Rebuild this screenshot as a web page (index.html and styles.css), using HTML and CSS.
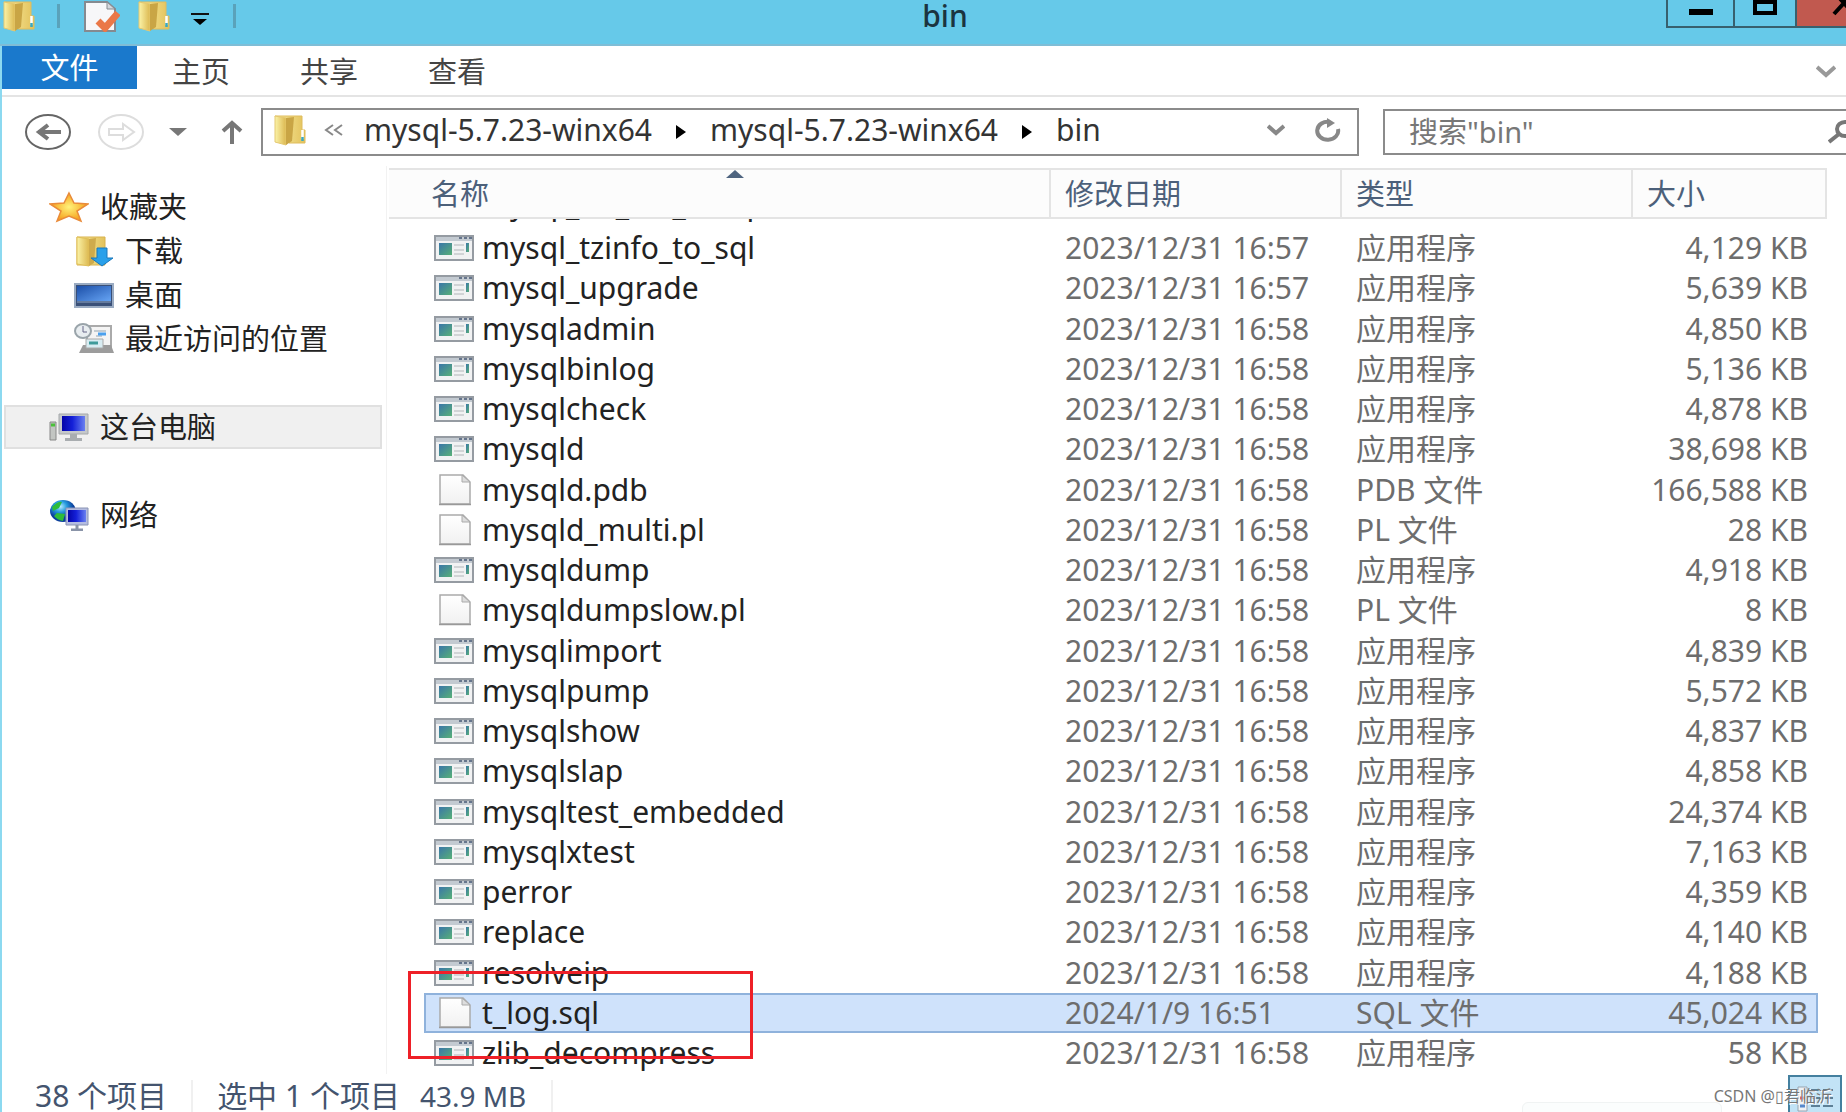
FILE: index.html
```html
<!DOCTYPE html>
<html lang="zh-CN">
<head>
<meta charset="utf-8">
<title>bin</title>
<link rel="stylesheet" href="styles.css">
</head>
<body>
<svg class="defs" aria-hidden="true">
  <defs>
    <linearGradient id="gold" x1="0" x2="1"><stop offset="0" stop-color="#fbf3a8"/><stop offset="1" stop-color="#dcb850"/></linearGradient>
    <linearGradient id="gold2" x1="0" x2="1"><stop offset="0" stop-color="#f8eca0"/><stop offset="1" stop-color="#e3c25c"/></linearGradient>
    <linearGradient id="paper" x1="0" y1="0" x2="0" y2="1"><stop offset="0" stop-color="#fff"/><stop offset="1" stop-color="#f1f1f1"/></linearGradient>
    <linearGradient id="app" x1="0" y1="0" x2="1" y2="1"><stop offset="0" stop-color="#3a76a8"/><stop offset="1" stop-color="#58b077"/></linearGradient>
    <linearGradient id="screen" x1="0" x2="1"><stop offset="0" stop-color="#0505a8"/><stop offset=".45" stop-color="#1420d8"/><stop offset="1" stop-color="#6a80f0"/></linearGradient>
    <linearGradient id="desk" x1="0" y1="0" x2="1" y2="1"><stop offset="0" stop-color="#1c4fa8"/><stop offset="1" stop-color="#66a4f4"/></linearGradient>
    <radialGradient id="star"><stop offset="0" stop-color="#fff27a"/><stop offset="1" stop-color="#f6a01c"/></radialGradient>
    <radialGradient id="globe" cx=".4" cy=".3"><stop offset="0" stop-color="#b8ecff"/><stop offset=".5" stop-color="#259ade"/><stop offset="1" stop-color="#0b3f9c"/></radialGradient>
    <symbol id="i-folder" viewBox="0 0 34 32">
      <path d="M2 2h27v14h3v13H16z" fill="url(#gold2)" stroke="#dfbc5c"/>
      <path d="M2 2l11 2v27L2 28z" fill="url(#gold)" stroke="#e4c870"/>
      <path d="M13 4l8-1-2 24-6 4z" fill="#c9a545"/>
      <path d="M29.500 16v9" stroke="#fff" stroke-width="2.500"/><path d="M29.500 23v4" stroke="#3aa8c0" stroke-width="2.500"/>
    </symbol>
    <symbol id="i-exe" viewBox="0 0 40 26">
      <path d="M1 1h38v24H1z" fill="#f1f2f3" stroke="#959ba2" stroke-width="2"/>
      <path d="M2 2h36v4H2z" fill="#c3cad1"/><path d="M25 3h3M30 3h3M35 3h3" stroke="#66758c" stroke-width="2"/>
      <path d="M5 8h13v12H5z" fill="url(#app)"/><path d="M20 10h10M20 15h10M20 19h10" stroke="#c6cacd" stroke-width="1.500"/>
      <path d="M32 8h3v9h-3z" fill="url(#app)"/>
    </symbol>
    <symbol id="i-file" viewBox="0 0 40 32">
      <path d="M6 1h23l7 7v22H6z" fill="url(#paper)" stroke="#aaa" stroke-width="1.500"/>
      <path d="M28 1v7h8z" fill="#ddd" stroke="#aaa"/><path d="M5 30.500h32" stroke="#999" stroke-width="1.500"/>
    </symbol>
  </defs>
</svg>

<div class="window">
  <header class="titlebar">
    <div class="quick">
      <svg class="folder" width="34" height="32"><use href="#i-folder"/></svg>
      <span class="sep"></span>
      <button aria-label="属性"><svg width="36" height="32" viewBox="0 0 36 32"><path d="M1 2h22l8 7v22H1z" fill="#f7f7f9" stroke="#858a90" stroke-width="2"/><path d="M23 2v7h8z" fill="#d5d8dd" stroke="#858a90"/><path d="M14 21l7 7L34 13" fill="none" stroke="#ea7848" stroke-width="7"/></svg></button>
      <button aria-label="新建文件夹"><svg class="folder" width="34" height="32"><use href="#i-folder"/></svg></button>
      <button aria-label="自定义快速访问工具栏"><svg width="18" height="14" viewBox="0 0 18 14"><path d="M0 2h18" stroke="#111" stroke-width="2"/><path d="M2 7h14l-7 6z"/></svg></button>
      <span class="sep"></span>
    </div>
    <h1>bin</h1>
    <div class="controls">
      <button class="min" aria-label="最小化"><svg width="24" height="28" viewBox="0 0 24 28"><path d="M0 12h24" stroke="#000" stroke-width="6"/></svg></button>
      <button class="max" aria-label="最大化"><svg width="24" height="28" viewBox="0 0 24 28"><path d="M2 2h20v11H2z" fill="none" stroke="#000" stroke-width="4"/></svg></button>
      <button class="close" aria-label="关闭"><svg width="24" height="28" viewBox="0 0 24 28"><path d="M2-8l20 22M22-8L2 14" stroke="#000" stroke-width="4"/></svg></button>
    </div>
  </header>

  <nav class="ribbon">
    <button class="file">文件</button>
    <button>主页</button>
    <button>共享</button>
    <button>查看</button>
    <button class="expand" aria-label="展开功能区"><svg width="20" height="14" viewBox="0 0 20 14"><path d="M1 2l9 8 9-8" fill="none" stroke="#999" stroke-width="4"/></svg></button>
  </nav>

  <div class="navbar">
    <div class="arrows">
      <button aria-label="后退"><svg width="48" height="38" viewBox="0 0 48 38"><ellipse cx="24" cy="19" rx="22" ry="17" fill="none" stroke="#666" stroke-width="2"/><path d="M37 19H14M24 12l-9 7 9 7" fill="none" stroke="#777" stroke-width="4"/></svg></button>
      <button aria-label="前进"><svg width="48" height="38" viewBox="0 0 48 38"><ellipse cx="24" cy="19" rx="22" ry="17" fill="none" stroke="#ddd" stroke-width="2"/><path d="M12 16h14v-5l11 8-11 8v-5H12z" fill="none" stroke="#ddd" stroke-width="2"/></svg></button>
      <button aria-label="最近位置"><svg width="18" height="8" viewBox="0 0 18 8"><path d="M0 0h18L9 8z" fill="#777"/></svg></button>
      <button aria-label="上移"><svg width="22" height="24" viewBox="0 0 22 24"><path d="M11 24V4M2 11l9-8 9 8" fill="none" stroke="#777" stroke-width="4"/></svg></button>
    </div>
    <div class="address">
      <svg width="34" height="32"><use href="#i-folder"/></svg>
      <svg class="more" width="20" height="12" viewBox="0 0 20 12"><path d="M9 1L2 6l7 5M18 1l-7 5 7 5" fill="none" stroke="#888" stroke-width="2"/></svg>
      <a href="#">mysql-5.7.23-winx64</a>
      <svg class="tri" width="10" height="14" viewBox="0 0 10 14"><path d="M0 0l10 7-10 7z"/></svg>
      <a href="#">mysql-5.7.23-winx64</a>
      <svg class="tri" width="10" height="14" viewBox="0 0 10 14"><path d="M0 0l10 7-10 7z"/></svg>
      <a href="#">bin</a>
      <button class="drop" aria-label="历史记录"><svg width="18" height="14" viewBox="0 0 18 14"><path d="M1 3l8 7 8-7" fill="none" stroke="#888" stroke-width="4"/></svg></button>
      <button aria-label="刷新"><svg width="26" height="24" viewBox="0 0 26 24"><path d="M23 11A10.500 9 0 1 1 15 4" fill="none" stroke="#888" stroke-width="4"/><path d="M12 0l8 5-8 5z" fill="#888"/></svg></button>
    </div>
    <label class="search">
      <input type="text" placeholder='搜索"bin"' aria-label="搜索">
      <svg width="26" height="24" viewBox="0 0 26 24"><ellipse cx="17" cy="9" rx="8" ry="7" fill="none" stroke="#777" stroke-width="4"/><path d="M11 14l-10 8" stroke="#777" stroke-width="4"/></svg>
    </label>
  </div>

  <main class="content">
    <aside class="sidebar">
      <a href="#"><svg width="40" height="32" viewBox="0 0 40 32"><path d="M20 2l5 10 14 1-11 7 4 10-12-5-12 5 4-10L1 13l14-1z" fill="url(#star)" stroke="#e98b3a" stroke-width="1.500"/></svg>收藏夹</a>
      <a href="#" class="sub"><svg width="40" height="32" viewBox="0 0 40 32"><path d="M3 2h28v28H3z" fill="url(#gold2)" stroke="#d9b24c"/><path d="M3 2l12 2v27L3 29z" fill="url(#gold)" stroke="#e0bf58"/><path d="M15 4l7-1-2 25-5 3z" fill="#cfab4c"/><path d="M23 13h10v10h6L28 31 17 23h6z" fill="#29a0ea" stroke="#1a78bc"/></svg>下载</a>
      <a href="#" class="sub"><svg width="40" height="32" viewBox="0 0 40 32"><path d="M1 5h38v23H1z" fill="#3a5078" stroke="#9aabc2" stroke-width="2"/><path d="M3 7h34v15H3z" fill="url(#desk)"/><path d="M3 23h34" stroke="#8fa6c4"/></svg>桌面</a>
      <a href="#" class="sub"><svg width="40" height="32" viewBox="0 0 40 32"><path d="M13 3h24v22H13z" fill="#f4f4f4" stroke="#aaa" stroke-width="2"/><path d="M20 8h12M22 13h6" stroke="#c4ccd2" stroke-width="2"/><path d="M24 11h8" stroke="#4aa0ee" stroke-width="3"/><path d="M9 22h28l3 8H5z" fill="#9c9c9c"/><path d="M12 16h17v9H12z" fill="#d8ecf2" stroke="#aaa"/><path d="M15 20h9" stroke="#3f9a9a" stroke-width="3"/><ellipse cx="9" cy="8" rx="8" ry="7" fill="#e8edf0" stroke="#9aa4aa" stroke-width="2"/><path d="M9 3v6h4" fill="none" stroke="#668"/></svg>最近访问的位置</a>
      <a href="#" class="group current"><svg width="40" height="32" viewBox="0 0 40 32"><path d="M10 3h29v20H10z" fill="#c5c8ca" stroke="#a5a8aa"/><path d="M13 5h23v15H13z" fill="url(#screen)"/><path d="M21 23h7v4h5v3H16v-3h5z" fill="#a9adb0"/><path d="M1 11h6v18H1z" fill="#c2c5c2" stroke="#888"/><path d="M2 14h4" stroke="#4ac03a" stroke-width="3"/></svg>这台电脑</a>
      <a href="#" class="group"><svg width="40" height="32" viewBox="0 0 40 32"><ellipse cx="14" cy="12" rx="13" ry="11" fill="url(#globe)"/><path d="M3 8q6-6 10-5l-3 6-6 3zM8 14l8 1-2 7q-6-1-9-5z" fill="#2ebc3a"/><path d="M17 9h22v17H17z" fill="#b4bce0" stroke="#8a94b4"/><path d="M19 11h18v12H19z" fill="url(#screen)"/><path d="M28 26v4M22 31h12" stroke="#8a94a8" stroke-width="3"/></svg>网络</a>
    </aside>

    <section class="list">
      <table>
        <colgroup><col><col class="c-date"><col class="c-type"><col class="c-size"></colgroup>
        <thead><tr>
          <th class="name">名称<svg class="sort" width="18" height="8" viewBox="0 0 18 8"><path d="M9 0l9 8H0z" fill="#4f6580"/></svg></th>
          <th>修改日期</th><th>类型</th><th>大小</th>
        </tr></thead>
        <tbody id="rows"></tbody>
      </table>
      <div class="marker"></div>
    </section>
  </main>

  <footer class="status">
    <span class="count">38 个项目</span>
    <span class="picked">选中 1 个项目<span class="bytes">43.9 MB</span></span>
    <button class="view" aria-label="详细信息"><svg width="36" height="26" viewBox="0 0 36 26"><path d="M1 1h9v24H1z" fill="#eef2f6" stroke="#98a4b0"/><path d="M3 12h5" stroke="#d66" stroke-width="3"/><path d="M3 20h5" stroke="#58c" stroke-width="3"/><path d="M14 4h9M26 4h10M14 12h9M26 12h10M14 20h9M26 20h10" stroke="#5d7f96" stroke-width="2"/></svg></button>
    <span class="toast"></span>
    <span class="watermark">CSDN @▯君临沂</span>
  </footer>
</div>
<script src="app.js"></script>
</body>
</html>
```
FILE: styles.css
```css
* { box-sizing: border-box; }
html, body { height: 100%; }
body {
  margin: 0;
  overflow: hidden;
  background: #fff;
  color: #222;
  font: 29px/40px "Noto Sans", "Noto Sans CJK SC", sans-serif;
}
button { margin: 0; padding: 0; border: 0; background: none; color: inherit; font: inherit; }
a { color: inherit; text-decoration: none; }
svg { display: block; flex: none; }
.defs { position: absolute; width: 0; height: 0; }

.window { display: flex; flex-direction: column; height: 100%; border-left: 2px solid #8cd9f0; }

.titlebar {
  display: grid;
  grid-template-columns: 1fr auto 1fr;
  height: 46px;
  margin-left: -2px;
  background: #66c9e9;
  border-bottom: 2px solid #7fbdd6;
}
.quick { display: flex; align-items: center; height: 32px; padding-left: 2px; }
.quick .sep { width: 3px; height: 24px; background: #5aa2ba; }
.quick .sep:nth-of-type(1) { margin: 0 24px 0 21px; }
.quick button + button { margin-left: 17px; }
.quick button:nth-of-type(3) { margin: 6px 24px 0 20px; }
.titlebar h1 { margin: 0; padding-left: 44px; font-size: 30px; font-weight: 500; line-height: 32px; color: #1b3440; }
.controls { display: flex; justify-content: flex-end; height: 28px; margin-right: -46px; }
.controls button { display: flex; justify-content: center; border: 2px solid #37606e; border-top: 0; }
.controls button + button { border-left: 0; }
.controls .min { width: 69px; }
.controls .max { width: 62px; }
.controls .close { width: 95px; background: #c1594f; }

.ribbon { display: flex; height: 51px; border-bottom: 2px solid #e4e4e4; color: #444; }
.ribbon button { width: 128px; padding-top: 2px; }
.ribbon .file { width: 135px; height: 43px; padding: 0; background: #1a79cc; color: #fff; line-height: 36px; }
.ribbon .expand { width: 20px; margin: 0 10px 0 auto; }

.navbar { display: flex; align-items: center; height: 69px; color: #333; }
.arrows { display: flex; align-items: center; width: 259px; padding-left: 22px; }
.arrows button:nth-child(2) { margin-left: 25px; }
.arrows button:nth-child(3) { margin-left: 24px; }
.arrows button:nth-child(4) { margin-left: 34px; }
.address { display: flex; flex: 1; align-items: center; height: 48px; padding: 0 16px 4px 10px; border: 2px solid #8b8b8b; font-size: 30px; }
.address .more { margin: 0 20px 0 17px; }
.address .tri { margin: 4px 24px 0; }
.address .drop { margin: 0 30px 0 auto; }
.search { display: flex; align-items: center; width: 483px; height: 46px; margin: 0 -20px 0 24px; padding-left: 24px; border: 2px solid #8b8b8b; }
.search input { flex: 1; min-width: 0; padding: 0; border: 0; outline: 0; background: none; color: #777; font: inherit; }
.search input::placeholder { color: #777; opacity: 1; }
.search svg { margin-right: 10px; }

.content { display: flex; flex: 1; min-height: 0; }
.sidebar { flex: none; width: 385px; padding: 19px 4px 0 2px; border-right: 1px solid #f2f2f2; }
.sidebar a { display: flex; align-items: center; gap: 11px; height: 44px; padding-left: 43px; border: 2px solid transparent; }
.sidebar .sub { padding-left: 68px; }
.sidebar .group { margin-top: 44px; }
.sidebar .current { background: #f0f0f0; border-color: #e0e0e0; }

.list { position: relative; flex: 1; min-width: 0; padding: 2px 19px 0 2px; }
table { width: 100%; border-collapse: separate; border-spacing: 0; table-layout: fixed; }
.c-date, .c-type { width: 291px; }
.c-size { width: 194px; }
th {
  position: relative;
  height: 51px;
  padding: 0 0 0 14px;
  background: #fcfcfc;
  border: solid #e4e4e4;
  border-width: 2px 2px 2px 0;
  color: #4c607a;
  font-weight: 400;
  text-align: left;
}
th.name { padding-left: 42px; }
.sort { position: absolute; top: 0; left: 51%; }
td { padding: 0; color: #6d6d6d; font-size: 30px; white-space: nowrap; }
td:first-child { padding-left: 35px; color: #222; }
td:last-child { padding-right: 9px; }
.cell { display: flex; align-items: center; height: 40px; padding-left: 14px; }
tr:nth-child(4n) .cell { height: 41px; }
td:first-child .cell { gap: 8px; padding-left: 10px; }
td:last-child .cell { justify-content: flex-end; padding-right: 10px; }
.clipped .cell { height: 9px; align-items: flex-end; overflow: hidden; line-height: 48px; }
.selected .cell { background: #cfe2fb; border: solid #8fb2dc; border-width: 2px 0; }
.selected td:first-child .cell { border-left-width: 2px; padding-left: 8px; }
.selected td:last-child .cell { border-right-width: 2px; padding-right: 8px; }
.marker { position: absolute; left: 21px; top: 805px; width: 345px; height: 88px; border: 3px solid #ee2028; }

.status { position: relative; display: flex; flex: none; align-items: center; height: 38px; padding: 6px 4px 0 33px; color: #44546e; font-size: 30px; }
.status .count, .status .picked { border-right: 2px solid #f0f0f0; line-height: 32px; }
.status .count { padding-right: 24px; }
.status .picked { padding: 0 25px 0 24px; }
.status .bytes { margin-left: 20px; font-size: 28px; }
.status .view { display: flex; justify-content: center; align-self: flex-start; width: 54px; height: 44px; margin: -5px 0 0 auto; padding-top: 9px; background: #c2e3f6; border: 2px solid #44809f; }
.toast { position: absolute; right: 124px; top: 28px; width: 200px; height: 20px; border: 1px solid #f0f3f3; border-radius: 6px; background: #fbfdfd; }
.watermark { position: absolute; right: 14px; top: 8px; font-size: 16px; line-height: 28px; color: #777; text-shadow: 1px 1px 0 #fff; }
```
FILE: app.js
```js
const APP = "应用程序";
const files = [
  ["mysql_ssl_rsa_setup", "", "", ""],
  ["mysql_tzinfo_to_sql", "2023/12/31 16:57", APP, "4,129"],
  ["mysql_upgrade", "2023/12/31 16:57", APP, "5,639"],
  ["mysqladmin", "2023/12/31 16:58", APP, "4,850"],
  ["mysqlbinlog", "2023/12/31 16:58", APP, "5,136"],
  ["mysqlcheck", "2023/12/31 16:58", APP, "4,878"],
  ["mysqld", "2023/12/31 16:58", APP, "38,698"],
  ["mysqld.pdb", "2023/12/31 16:58", "PDB 文件", "166,588"],
  ["mysqld_multi.pl", "2023/12/31 16:58", "PL 文件", "28"],
  ["mysqldump", "2023/12/31 16:58", APP, "4,918"],
  ["mysqldumpslow.pl", "2023/12/31 16:58", "PL 文件", "8"],
  ["mysqlimport", "2023/12/31 16:58", APP, "4,839"],
  ["mysqlpump", "2023/12/31 16:58", APP, "5,572"],
  ["mysqlshow", "2023/12/31 16:58", APP, "4,837"],
  ["mysqlslap", "2023/12/31 16:58", APP, "4,858"],
  ["mysqltest_embedded", "2023/12/31 16:58", APP, "24,374"],
  ["mysqlxtest", "2023/12/31 16:58", APP, "7,163"],
  ["perror", "2023/12/31 16:58", APP, "4,359"],
  ["replace", "2023/12/31 16:58", APP, "4,140"],
  ["resolveip", "2023/12/31 16:58", APP, "4,188"],
  ["t_log.sql", "2024/1/9 16:51", "SQL 文件", "45,024"],
  ["zlib_decompress", "2023/12/31 16:58", APP, "58"],
];

document.getElementById("rows").innerHTML = files.map(([name, date, type, size], i) => {
  const exe = type === APP || i === 0;
  const icon = i === 0
    ? '<svg width="40" height="1"></svg>'
    : `<svg width="40" height="${exe ? 26 : 32}"><use href="#${exe ? "i-exe" : "i-file"}"/></svg>`;
  const state = i === 0 ? "clipped" : name === "t_log.sql" ? "selected" : "";
  return `<tr class="${state}">
    <td><div class="cell">${icon}${name}</div></td>
    <td><div class="cell">${date}</div></td>
    <td><div class="cell">${type}</div></td>
    <td><div class="cell">${size ? size + " KB" : ""}</div></td>
  </tr>`;
}).join("");
```
